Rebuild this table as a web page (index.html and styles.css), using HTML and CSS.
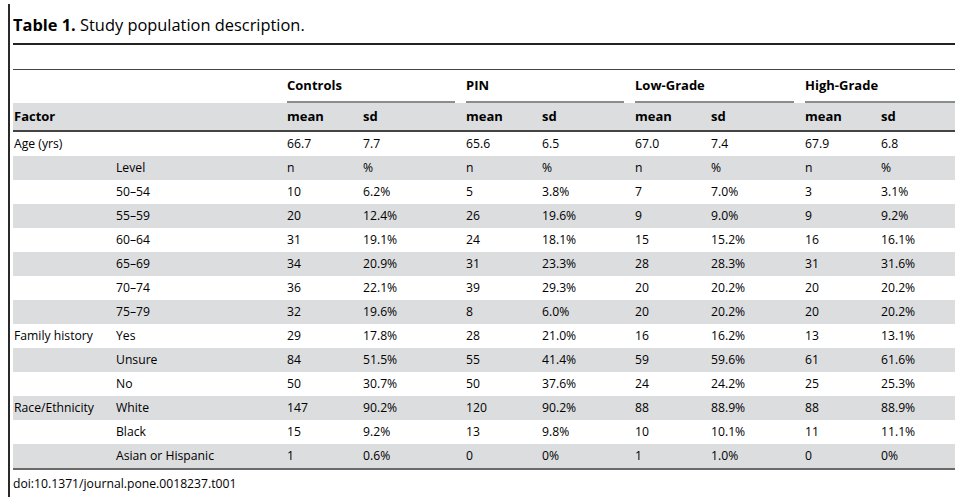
FILE: index.html
```html
<!DOCTYPE html>
<html>
<head>
<meta charset="utf-8">
<link rel="stylesheet" href="styles.css">
</head>
<body>
<div class="page">
  <div class="caption"><b>Table 1.</b> Study population description.</div>
  <div class="rule-thick"></div>
  <table class="data">
    <colgroup>
      <col class="w1"><col class="w2"><col class="wm"><col class="ws1"><col class="wm"><col class="ws2"><col class="wm"><col class="ws3"><col class="wm"><col class="ws4">
    </colgroup>
    <thead>
      <tr class="group">
        <th colspan="2"></th>
        <th colspan="2"><div class="grp">Controls</div></th>
        <th colspan="2"><div class="grp">PIN</div></th>
        <th colspan="2"><div class="grp">Low-Grade</div></th>
        <th colspan="2"><div class="grp last">High-Grade</div></th>
      </tr>
      <tr class="sub">
        <th>Factor</th><th></th>
        <th>mean</th><th>sd</th>
        <th>mean</th><th>sd</th>
        <th>mean</th><th>sd</th>
        <th>mean</th><th>sd</th>
      </tr>
    </thead>
    <tbody>
      <tr><td>Age (yrs)</td><td></td><td>66.7</td><td>7.7</td><td>65.6</td><td>6.5</td><td>67.0</td><td>7.4</td><td>67.9</td><td>6.8</td></tr>
      <tr class="alt"><td></td><td>Level</td><td>n</td><td>%</td><td>n</td><td>%</td><td>n</td><td>%</td><td>n</td><td>%</td></tr>
      <tr><td></td><td>50–54</td><td>10</td><td>6.2%</td><td>5</td><td>3.8%</td><td>7</td><td>7.0%</td><td>3</td><td>3.1%</td></tr>
      <tr class="alt"><td></td><td>55–59</td><td>20</td><td>12.4%</td><td>26</td><td>19.6%</td><td>9</td><td>9.0%</td><td>9</td><td>9.2%</td></tr>
      <tr><td></td><td>60–64</td><td>31</td><td>19.1%</td><td>24</td><td>18.1%</td><td>15</td><td>15.2%</td><td>16</td><td>16.1%</td></tr>
      <tr class="alt"><td></td><td>65–69</td><td>34</td><td>20.9%</td><td>31</td><td>23.3%</td><td>28</td><td>28.3%</td><td>31</td><td>31.6%</td></tr>
      <tr><td></td><td>70–74</td><td>36</td><td>22.1%</td><td>39</td><td>29.3%</td><td>20</td><td>20.2%</td><td>20</td><td>20.2%</td></tr>
      <tr class="alt"><td></td><td>75–79</td><td>32</td><td>19.6%</td><td>8</td><td>6.0%</td><td>20</td><td>20.2%</td><td>20</td><td>20.2%</td></tr>
      <tr><td>Family history</td><td>Yes</td><td>29</td><td>17.8%</td><td>28</td><td>21.0%</td><td>16</td><td>16.2%</td><td>13</td><td>13.1%</td></tr>
      <tr class="alt"><td></td><td>Unsure</td><td>84</td><td>51.5%</td><td>55</td><td>41.4%</td><td>59</td><td>59.6%</td><td>61</td><td>61.6%</td></tr>
      <tr><td></td><td>No</td><td>50</td><td>30.7%</td><td>50</td><td>37.6%</td><td>24</td><td>24.2%</td><td>25</td><td>25.3%</td></tr>
      <tr class="alt"><td>Race/Ethnicity</td><td>White</td><td>147</td><td>90.2%</td><td>120</td><td>90.2%</td><td>88</td><td>88.9%</td><td>88</td><td>88.9%</td></tr>
      <tr><td></td><td>Black</td><td>15</td><td>9.2%</td><td>13</td><td>9.8%</td><td>10</td><td>10.1%</td><td>11</td><td>11.1%</td></tr>
      <tr class="alt"><td></td><td>Asian or Hispanic</td><td>1</td><td>0.6%</td><td>0</td><td>0%</td><td>1</td><td>1.0%</td><td>0</td><td>0%</td></tr>
    </tbody>
  </table>
  <div class="doi">doi:10.1371/journal.pone.0018237.t001</div>
</div>
</body>
</html>
```

FILE: styles.css
```css
html, body {
  margin: 0;
  padding: 0;
  background: #ffffff;
}

body {
  font-family: "Open Sans", "Liberation Sans", sans-serif;
  color: #000;
}

.page {
  margin: 4px 0 0 8px;
  width: 942px;
  border-left: 2px solid #2a2a2a;
  padding: 0 0 5px 3px;
}

.caption {
  padding-top: 11px;
  height: 20px;
  line-height: 20px;
  font-size: 16.4px;
  margin-bottom: 8px;
}

.caption b {
  font-weight: 700;
}

.rule-thick {
  height: 2px;
  background: #222;
  margin-bottom: 24px;
}

.data {
  width: 942px;
  table-layout: fixed;
  border-collapse: collapse;
  border-top: 1px solid #444;
  border-bottom: 2px solid #6a6a6a;
  font-size: 12.2px;
}

.w1 { width: 102px; }
.w2 { width: 171px; }
.wm { width: 76px; }
.ws1 { width: 103px; }
.ws2 { width: 93px; }
.ws3 { width: 94px; }
.ws4 { width: 75px; }

.data th,
.data td {
  padding: 0 0 0 1px;
  text-align: left;
  white-space: nowrap;
}

.data th {
  font-weight: 700;
  font-size: 13px;
}

.group th {
  height: 33px;
  vertical-align: top;
}

.grp {
  height: 31px;
  line-height: 31px;
  border-bottom: 2px solid #8c8c8c;
  margin-right: 10px;
}

.grp.last {
  margin-right: 0;
}

.sub th {
  background: #dcdddf;
  height: 27px;
  line-height: 27px;
  border-bottom: 2px solid #444;
}

.data td {
  height: 24px;
  line-height: 24px;
}

.alt td {
  background: #dcdddf;
}

.doi {
  margin-top: 6px;
  line-height: 16px;
  font-size: 12.2px;
}
```
